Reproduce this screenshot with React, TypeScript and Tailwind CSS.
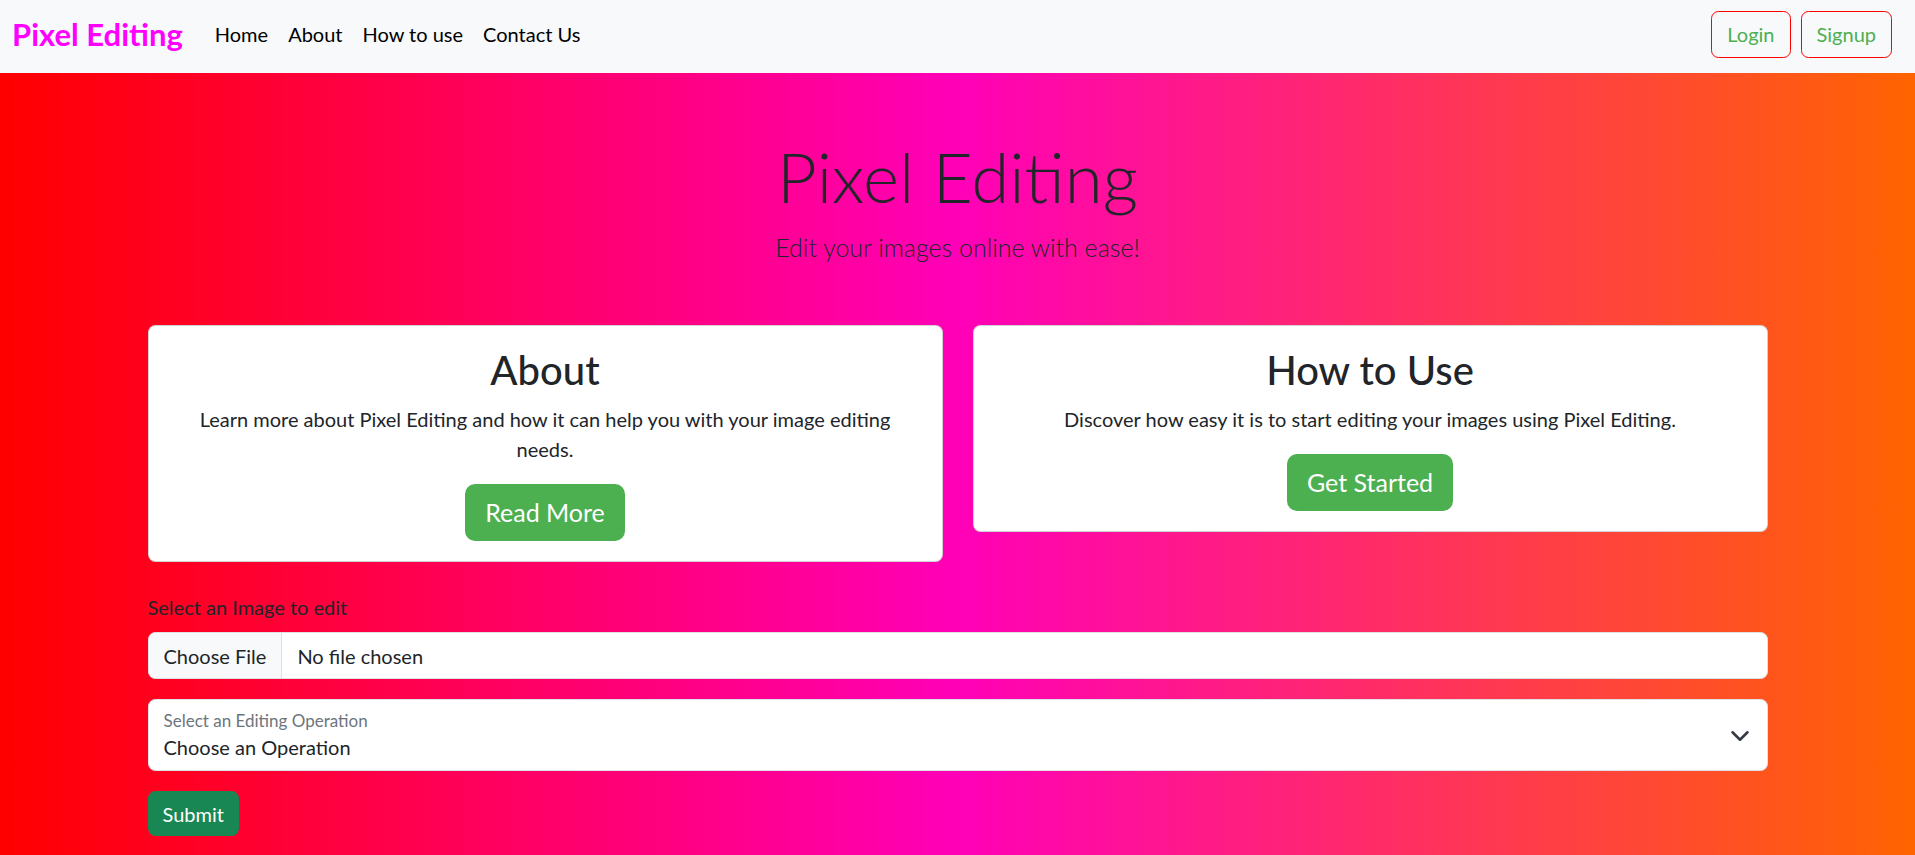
import { useState } from 'react'

const font = "font-['Segoe_UI',Lato,'Liberation_Sans',sans-serif]"

const NavBar = () => {
  const links = ['Home', 'About', 'How to use', 'Contact Us']
  return (
    <nav className="flex h-[73px] items-center justify-between bg-[#f8f9fa] pb-[5px] pl-3 pr-[23px]">
      <div className="flex items-center">
        <a href="#" className="mr-[22px] text-[31px] font-bold text-[#ff00ff]">
          Pixel Editing
        </a>
        <ul className="flex items-center">
          {links.map((link) => (
            <li key={link}>
              <a href="#" className="block px-[10px] py-[10px] text-[20px] leading-[30px] text-black">
                {link}
              </a>
            </li>
          ))}
        </ul>
      </div>
      <div className="flex items-center gap-[10px]">
        <button className="rounded-[7.5px] border border-[#ff0000] px-[15px] py-[7.5px] text-[20px] leading-[30px] text-[#4caf50]">
          Login
        </button>
        <button className="rounded-[7.5px] border border-[#ff0000] px-[15px] py-[7.5px] text-[20px] leading-[30px] text-[#4caf50]">
          Signup
        </button>
      </div>
    </nav>
  )
}

interface InfoCard {
  title: string
  text: string
  action: string
}

const cards: InfoCard[] = [
  {
    title: 'About',
    text: 'Learn more about Pixel Editing and how it can help you with your image editing needs.',
    action: 'Read More',
  },
  {
    title: 'How to Use',
    text: 'Discover how easy it is to start editing your images using Pixel Editing.',
    action: 'Get Started',
  },
]

const App: React.FC = () => {
  const [operation, setOperation] = useState<string>('')

  return (
    <div className={`min-h-screen bg-[linear-gradient(90deg,#ff0000_0%,#ff00b8_50%,#ff6400_100%)] text-[#212529] ${font}`}>
      <NavBar />

      {/* Hero */}
      <header className="pt-[62px] text-center">
        <h1 className="mb-[10px] text-[69px] font-light leading-[84px]">Pixel Editing</h1>
        <p className="text-[25px] font-light leading-[37.5px]">Edit your images online with ease!</p>
      </header>

      <main className="mx-auto mt-[58px] w-[1620px]">
        {/* Cards */}
        <div className="grid grid-cols-2 items-start gap-[30px]">
          {cards.map((card) => (
            <div
              key={card.title}
              className="rounded-[7.5px] border border-black/[0.175] bg-white p-5 text-center"
            >
              <h2 className="mb-[10px] text-[40px] font-medium leading-[48px]">{card.title}</h2>
              <p className="mx-auto mb-5 max-w-[720px] text-[20px] leading-[30px]">{card.text}</p>
              <button className="rounded-[10px] bg-[#4caf50] px-5 py-[10px] text-[25px] leading-[37.5px] text-white">
                {card.action}
              </button>
            </div>
          ))}
        </div>

        {/* Upload form */}
        <form className="mt-[30px] pb-10" onSubmit={(e) => e.preventDefault()}>
          <label className="mb-[10px] block text-[20px] leading-[30px]">Select an Image to edit</label>
          <div className="mb-5 flex h-[47px] overflow-hidden rounded-[7.5px] border border-[#dee2e6] bg-white text-[20px]">
            <span className="flex items-center border-r border-[#dee2e6] bg-[#f8f9fa] px-[15px]">Choose File</span>
            <span className="flex items-center px-[15px]">No file chosen</span>
          </div>

          <div className="relative mb-5 h-[72px] rounded-[7.5px] border border-[#dee2e6] bg-white">
            <span className="absolute left-[15px] top-[11px] text-[17px] leading-[20px] text-[#6c757d]">
              Select an Editing Operation
            </span>
            <select
              value={operation}
              onChange={(e) => setOperation(e.target.value)}
              className="h-full w-full appearance-none bg-transparent px-[15px] pt-[32px] pb-[8px] text-[20px] leading-[30px] outline-none"
            >
              <option value="">Choose an Operation</option>
              <option value="crop">Crop</option>
              <option value="resize">Resize</option>
              <option value="grayscale">Grayscale</option>
            </select>
            <svg
              className="pointer-events-none absolute right-[17px] top-[26px]"
              width="20"
              height="20"
              viewBox="0 0 16 16"
              fill="none"
              stroke="#343a40"
              strokeWidth="2"
              strokeLinecap="round"
              strokeLinejoin="round"
            >
              <path d="m2 5 6 6 6-6" />
            </svg>
          </div>

          <button type="submit" className="rounded-[7.5px] bg-[#198754] px-[15px] py-[7.5px] text-[20px] leading-[30px] text-white">
            Submit
          </button>
        </form>
      </main>
    </div>
  )
}

export default App
